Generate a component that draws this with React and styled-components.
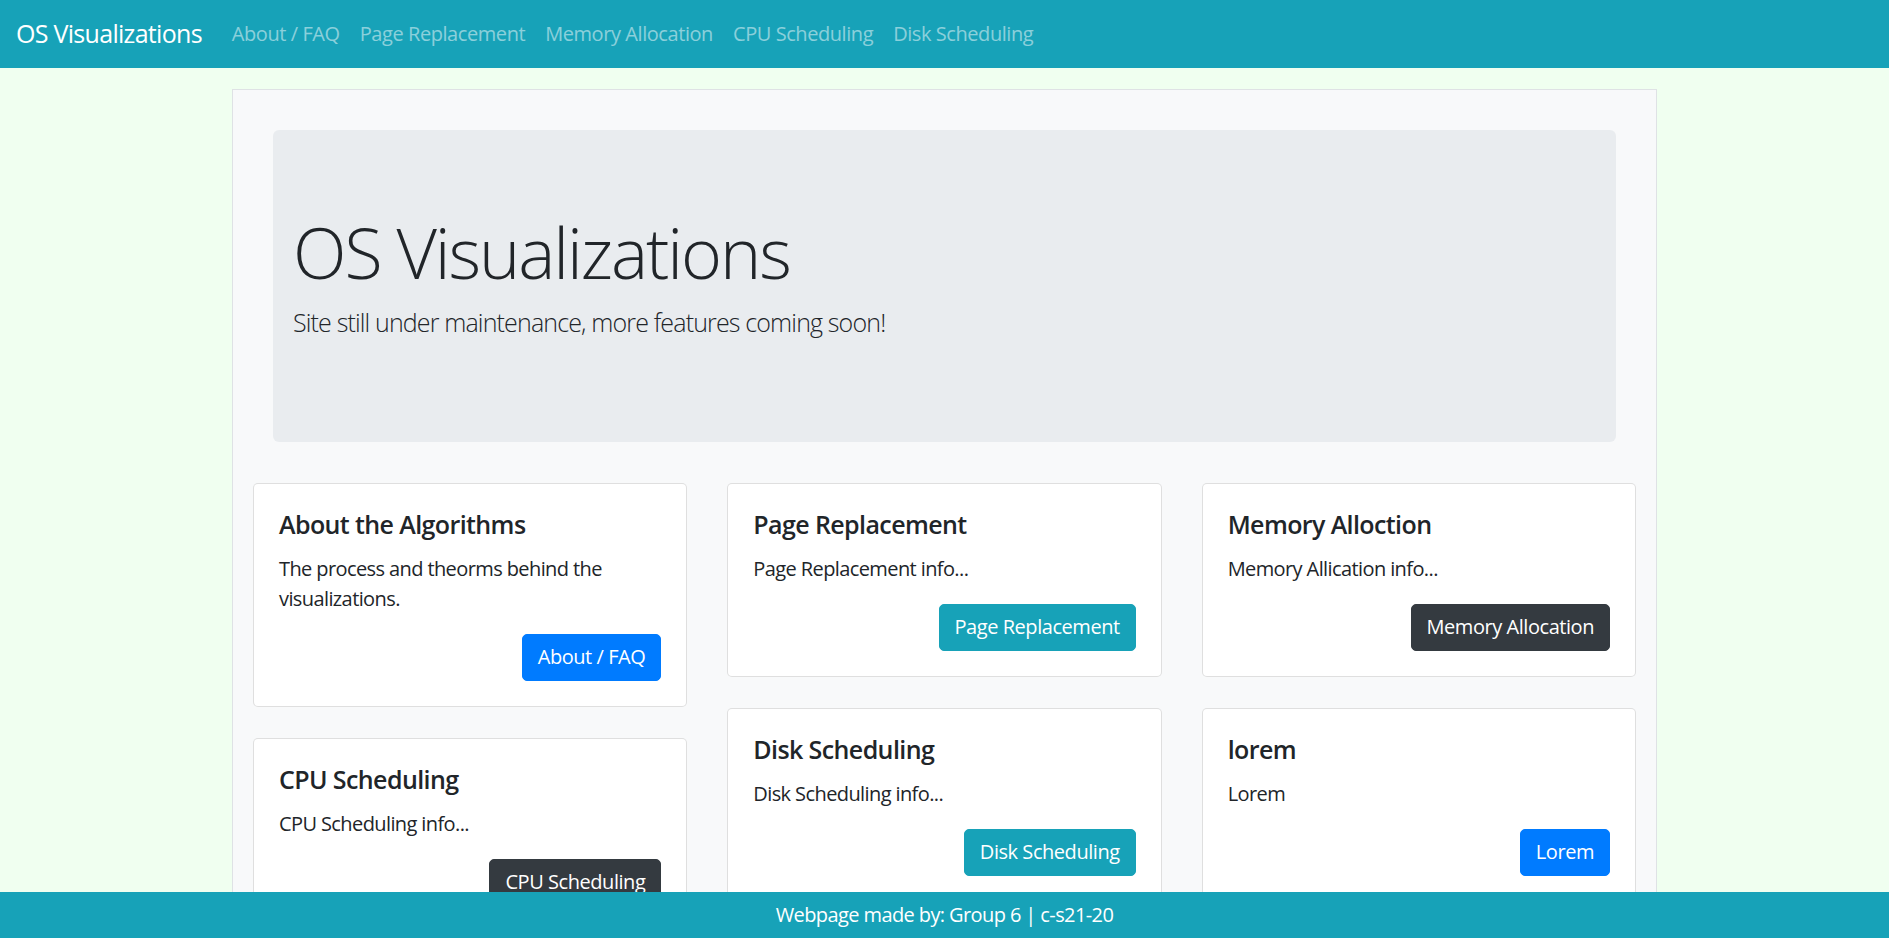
import styled, { createGlobalStyle } from "styled-components";

const GlobalStyle = createGlobalStyle`
  body {
    margin: 0;
    background-color: #f0fff0;
    font-family: "Open Sans", "Noto Sans", sans-serif;
    font-size: 20px;
    line-height: 1.5;
    color: #212529;
  }
`;

const NavbarStyled = styled.nav`
  height: 68px;
  display: flex;
  align-items: center;
  padding: 0 20px 0 16px;
  background-color: #17a2b8;
`;

const Brand = styled.a`
  font-size: 25px;
  color: white;
  margin-right: 20px;
  letter-spacing: -0.7px;
  text-decoration: none;
`;

const NavLink = styled.a`
  font-size: 20px;
  padding: 0 10px;
  color: rgba(255, 255, 255, 0.5);
  letter-spacing: -0.43px;
  text-decoration: none;
`;

const Container = styled.main`
  box-sizing: border-box;
  width: 1425px;
  margin: 21px auto 0;
  padding: 40px 20px 80px;
  background-color: #f8f9fa;
  border: 1px solid #dfe2e5;
`;

const Jumbotron = styled.section`
  margin: 0 20px 41px;
  padding: 80px 20px;
  background-color: #e9ecef;
  border-radius: 6px;
  & > h1 {
    margin: 0 0 10px;
    font-size: 70px;
    font-weight: 300;
    line-height: 1.2;
    letter-spacing: -2.1px;
  }
  & > p {
    margin: 0 0 20px;
    font-size: 25px;
    font-weight: 300;
    line-height: 1.5;
    letter-spacing: -0.85px;
  }
`;

const CardGrid = styled.div`
  display: grid;
  grid-template-columns: repeat(3, 1fr);
  column-gap: 40px;
  align-items: start;
`;

const CardColumn = styled.div`
  display: flex;
  flex-direction: column;
  gap: 31px;
`;

const Card = styled.div`
  background-color: white;
  border: 1px solid rgba(0, 0, 0, 0.125);
  border-radius: 5px;
  padding: 25px;
`;

const CardTitle = styled.h5`
  margin: 0 0 15px;
  font-size: 25px;
  font-weight: 600;
  line-height: 1.2;
  letter-spacing: -0.6px;
`;

const CardText = styled.p`
  margin: 0 0 20px;
  line-height: 30px;
  letter-spacing: -0.6px;
`;

const ButtonRow = styled.div`
  display: flex;
  justify-content: flex-end;
`;

const colors = {
  primary: "#007bff",
  info: "#17a2b8",
  dark: "#343a40",
};

const Button = styled.button`
  font-family: inherit;
  font-size: 20px;
  line-height: 30px;
  padding: 7.5px 15px;
  color: white;
  letter-spacing: -0.45px;
  background-color: ${(p) => colors[p.$variant]};
  border: 1px solid ${(p) => colors[p.$variant]};
  border-radius: 5px;
`;

const Footer = styled.footer`
  position: fixed;
  left: 0;
  right: 0;
  bottom: 0;
  height: 46px;
  line-height: 46px;
  text-align: center;
  color: white;
  letter-spacing: -0.6px;
  background-color: #17a2b8;
`;

const columns = [
  [
    {
      title: "About the Algorithms",
      text: "The process and theorms behind the visualizations.",
      button: "About / FAQ",
      variant: "primary",
    },
    {
      title: "CPU Scheduling",
      text: "CPU Scheduling info...",
      button: "CPU Scheduling",
      variant: "dark",
    },
  ],
  [
    {
      title: "Page Replacement",
      text: "Page Replacement info...",
      button: "Page Replacement",
      variant: "info",
    },
    {
      title: "Disk Scheduling",
      text: "Disk Scheduling info...",
      button: "Disk Scheduling",
      variant: "info",
    },
  ],
  [
    {
      title: "Memory Alloction",
      text: "Memory Allication info...",
      button: "Memory Allocation",
      variant: "dark",
    },
    {
      title: "lorem",
      text: "Lorem",
      button: "Lorem",
      variant: "primary",
    },
  ],
];

const InfoCard = ({ title, text, button, variant }) => (
  <Card>
    <CardTitle>{title}</CardTitle>
    <CardText>{text}</CardText>
    <ButtonRow>
      <Button $variant={variant}>{button}</Button>
    </ButtonRow>
  </Card>
);

const App = () => {
  return (
    <>
      <GlobalStyle />
      <NavbarStyled>
        <Brand href="#">OS Visualizations</Brand>
        <NavLink href="#">About / FAQ</NavLink>
        <NavLink href="#">Page Replacement</NavLink>
        <NavLink href="#">Memory Allocation</NavLink>
        <NavLink href="#">CPU Scheduling</NavLink>
        <NavLink href="#">Disk Scheduling</NavLink>
      </NavbarStyled>
      <Container>
        <Jumbotron>
          <h1>OS Visualizations</h1>
          <p>Site still under maintenance, more features coming soon!</p>
        </Jumbotron>
        <CardGrid>
          {columns.map((col, i) => (
            <CardColumn key={i}>
              {col.map((card) => (
                <InfoCard key={card.title} {...card} />
              ))}
            </CardColumn>
          ))}
        </CardGrid>
      </Container>
      <Footer>Webpage made by: Group 6 | c-s21-20</Footer>
    </>
  );
};

export default App;
